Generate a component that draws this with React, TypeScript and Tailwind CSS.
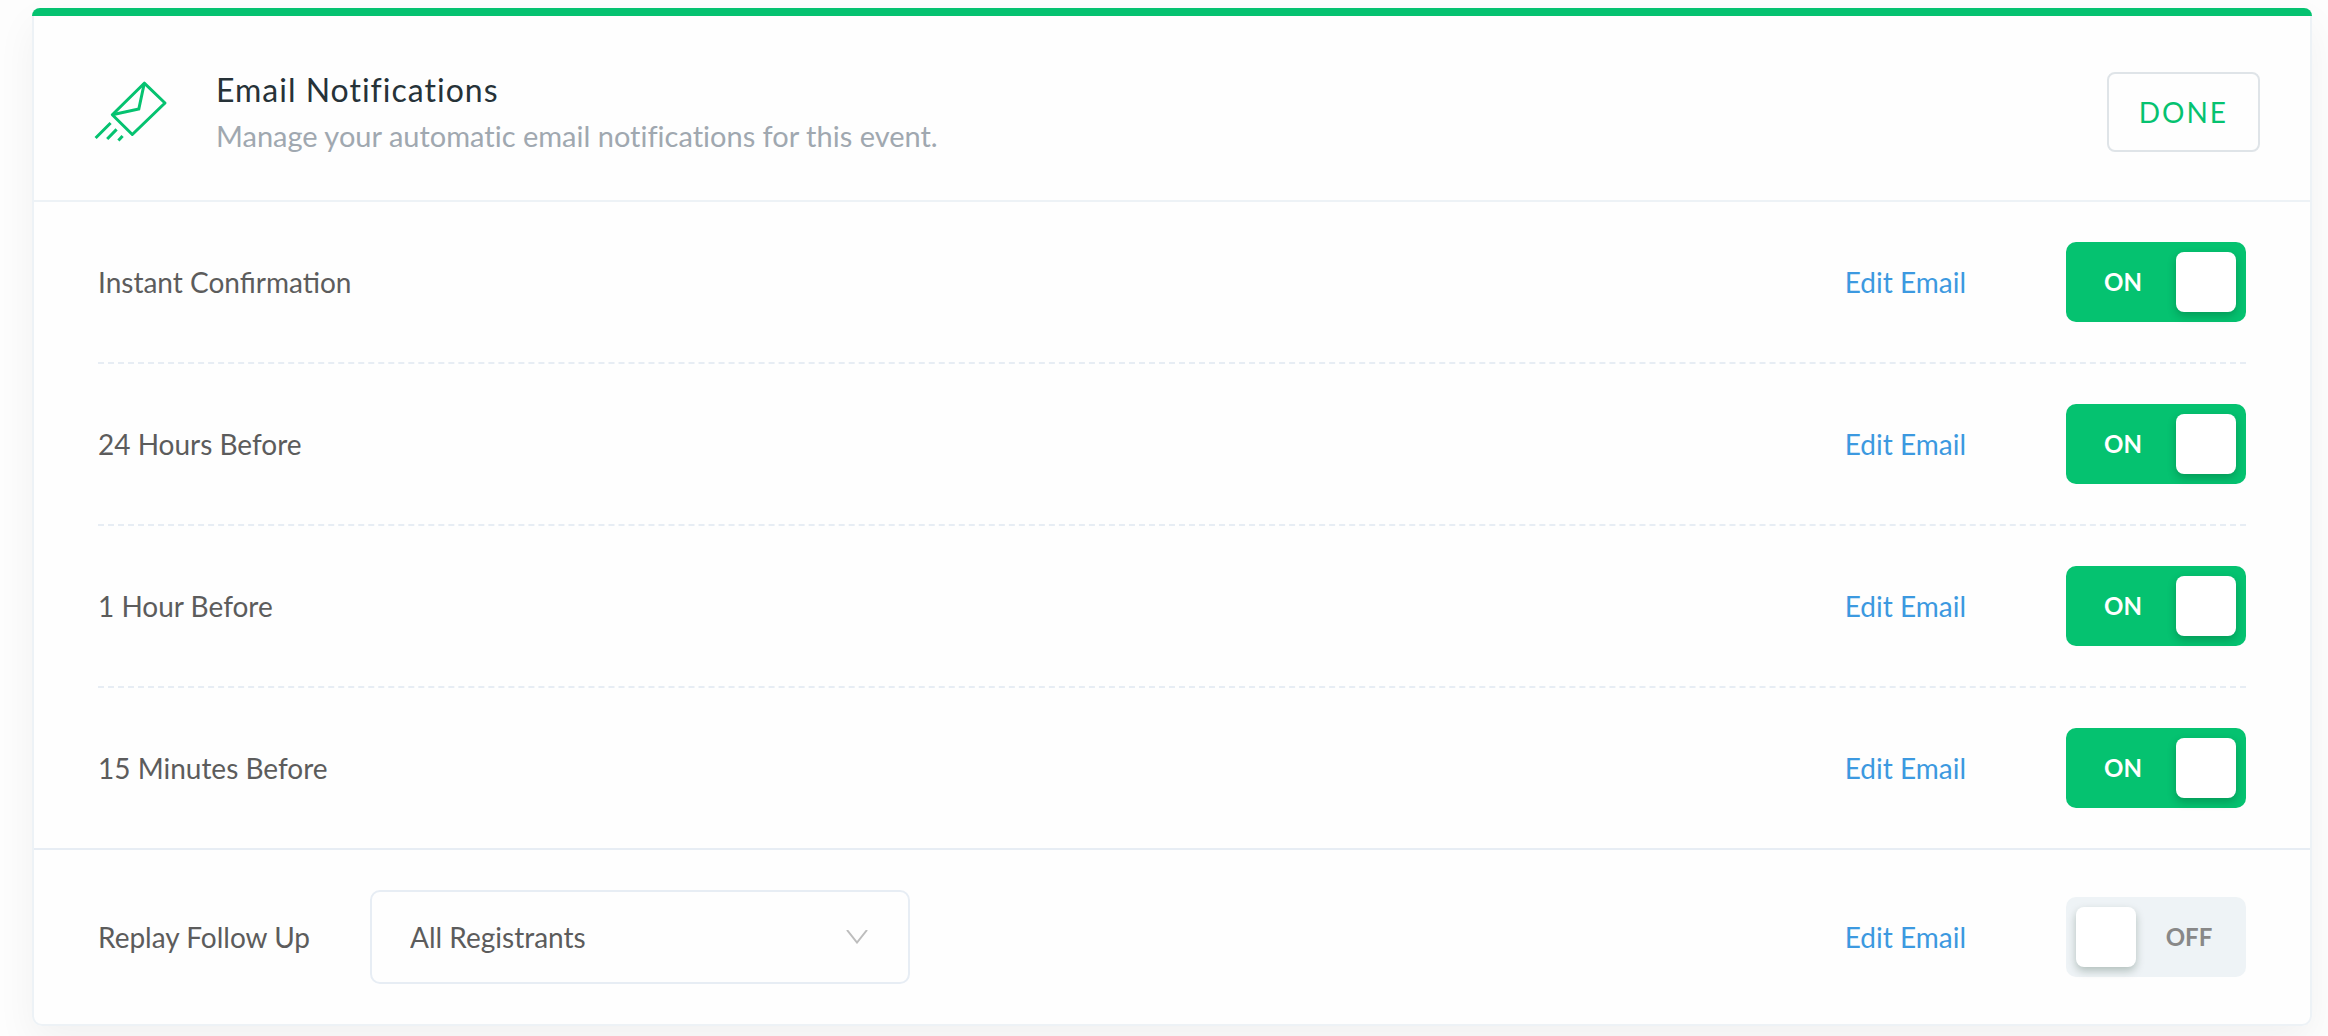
import { useState } from "react";

type Notification = { id: string; label: string };

const reminders: Notification[] = [
  { id: "instant", label: "Instant Confirmation" },
  { id: "day", label: "24 Hours Before" },
  { id: "hour", label: "1 Hour Before" },
  { id: "minutes", label: "15 Minutes Before" },
];

function FlyingEnvelope() {
  return (
    <svg
      className="h-16 w-19 shrink-0 text-[#05c270]"
      viewBox="0 0 76 64"
      fill="none"
      stroke="currentColor"
      strokeWidth="3"
      strokeLinejoin="round"
      aria-hidden="true"
    >
      <path d="M52.3 3.2 73 23 40.3 54.5 20.3 34.7Z" />
      <path d="M52.3 3.2 46.8 29 20.3 34.7" strokeLinejoin="miter" />
      <path d="M18.6 43 3.6 58M24.6 49.4 15.2 59M30.6 56 26.4 60.6" />
    </svg>
  );
}

function Toggle({ id, label, defaultOn }: { id: string; label: string; defaultOn: boolean }) {
  const [on, setOn] = useState(defaultOn);
  return (
    <label
      htmlFor={id}
      className={
        on
          ? "relative flex h-20 w-45 cursor-pointer items-center rounded-[10px] bg-[#05c270] p-2.5"
          : "relative flex h-20 w-45 cursor-pointer flex-row-reverse items-center rounded-[10px] bg-[#eef3f6] p-2.5"
      }
    >
      <input
        id={id}
        type="checkbox"
        role="switch"
        aria-label={label}
        checked={on}
        onChange={(e) => setOn(e.target.checked)}
        className="sr-only"
      />
      <span
        className={
          on
            ? "flex-1 pr-1.5 text-center text-2xl font-bold text-white"
            : "flex-1 pl-1.5 text-center text-2xl font-bold text-[#888888]"
        }
      >
        {on ? "ON" : "OFF"}
      </span>
      <span className="size-15 rounded-lg bg-white shadow-[0_4px_8px_rgba(0,40,20,0.25)]" />
    </label>
  );
}

function RowActions({ id, label, on }: { id: string; label: string; on: boolean }) {
  return (
    <div className="ml-auto flex items-center gap-25">
      <a href="#edit" className="text-[28px] text-[#3c99e0]">
        Edit Email
      </a>
      <Toggle id={id} label={label} defaultOn={on} />
    </div>
  );
}

export default function App() {
  return (
    <main className="min-h-screen bg-[#fdfdfd] pt-2 pr-4 pb-2.5 pl-8 font-['Lato',sans-serif] text-[#5c5c5c]">
      <section className="rounded-[10px] bg-[#fefefe] shadow-[0_16px_40px_rgba(0,0,0,0.05)]">
        <div className="h-2 rounded-t-[10px] bg-[#05c270]" />
        <div className="rounded-b-[10px] border-2 border-t-0 border-[#edf2f6]">
          <header className="flex items-center border-b-2 border-[#edf2f6] pt-12.5 pr-12.5 pb-10.5 pl-14.5">
            <FlyingEnvelope />
            <div className="ml-12">
              <h1 className="text-[32px] leading-12 tracking-[1px] text-[#263238]">Email Notifications</h1>
              <p className="text-[29px] leading-11 text-[#a0a8b0] [font-variant-ligatures:none]">
                Manage your automatic email notifications for this event.
              </p>
            </div>
            <button
              type="button"
              className="ml-auto h-20 rounded-lg border-2 border-[#dfe4e8] px-7.5 text-[28px] tracking-[2px] text-[#05c270]"
            >
              DONE
            </button>
          </header>

          <ul className="px-16">
            {reminders.map((item) => (
              <li
                key={item.id}
                className="flex items-center border-b-2 border-dashed border-[#e7edf4] py-10 last:border-b-0"
              >
                <span className="text-[28px]">{item.label}</span>
                <RowActions id={item.id} label={item.label} on />
              </li>
            ))}
          </ul>

          <div className="flex items-center border-t-2 border-[#e7edf4] px-16 py-10">
            <label htmlFor="audience" className="text-[28px]">
              Replay Follow Up
            </label>
            <div className="relative ml-15">
              <select
                id="audience"
                defaultValue="all"
                className="block h-23.5 w-135 appearance-none rounded-[10px] border-2 border-[#e7edf4] bg-transparent px-9.5 text-[28px]"
              >
                <option value="all">All Registrants</option>
                <option value="attendees">Attendees</option>
                <option value="absentees">Absentees</option>
              </select>
              <svg
                className="pointer-events-none absolute top-10 right-10.5 h-3.5 w-5.5 text-[#bdbdbd]"
                viewBox="0 0 22 14"
                fill="none"
                stroke="currentColor"
                strokeWidth="2"
                aria-hidden="true"
              >
                <path d="M1 0 11 12.5 21 0" />
              </svg>
            </div>
            <RowActions id="replay" label="Replay Follow Up" on={false} />
          </div>
        </div>
      </section>
    </main>
  );
}
